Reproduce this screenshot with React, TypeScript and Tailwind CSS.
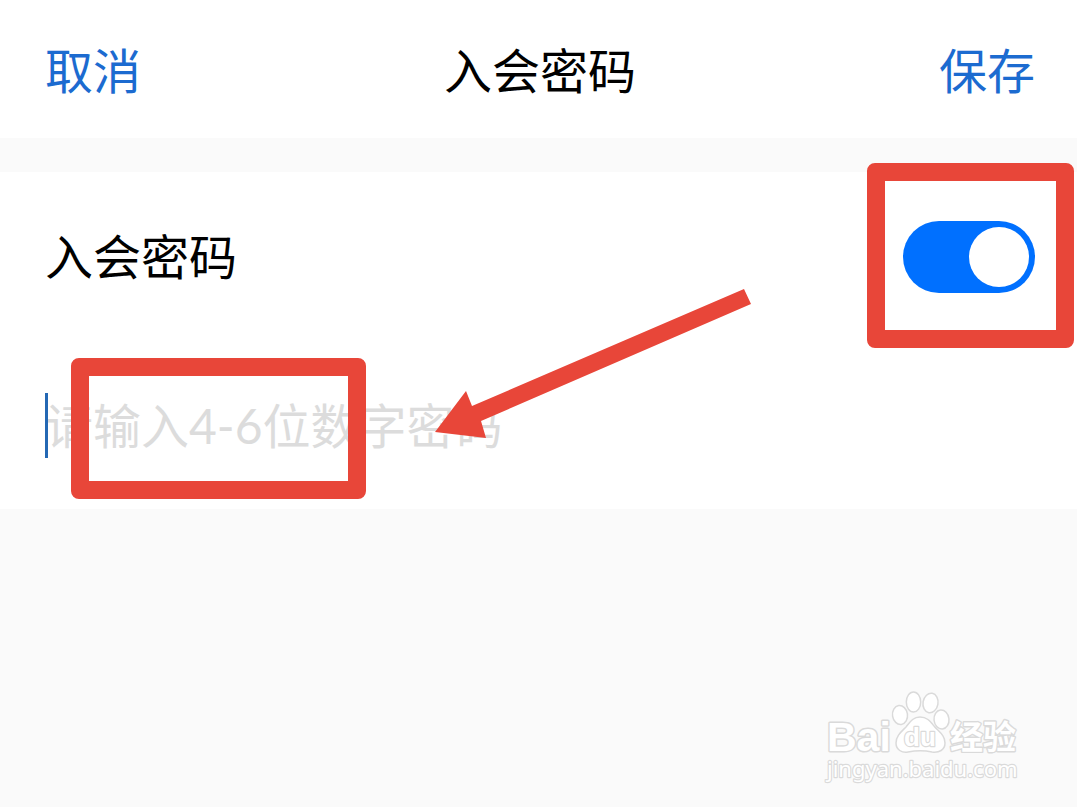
import React, { useState } from "react";

function Watermark() {
  return (
    <svg viewBox="0 0 206 106" className="w-[206px] h-[106px]" role="img" aria-label="Baidu 经验">
      <g fill="#ffffff" stroke="#dadada" strokeLinejoin="round">
        <text x="7" y="66" fontSize="41" fontWeight="700" paintOrder="stroke" strokeWidth="3" fontFamily="'Liberation Sans', sans-serif">
          Bai
        </text>
        <g strokeWidth="1.5">
          <ellipse cx="80" cy="30" rx="7.5" ry="9.5" transform="rotate(-8 80 30)" />
          <ellipse cx="93.5" cy="17" rx="7.2" ry="10" />
          <ellipse cx="110.5" cy="18" rx="7.5" ry="9.8" transform="rotate(10 110.5 18)" />
          <ellipse cx="121.5" cy="34.5" rx="7.5" ry="9.5" transform="rotate(-6 121.5 34.5)" />
          <path d="M100 32C93 32 90 37 86 42C81 47 76 51 76 58C76 65 82 68 88 67C96 65.5 105 65.5 112 67C119 68 125 65 125 58C125 50 119 47 114 41C110 36 107 32 100 32Z" />
        </g>
        <text x="84" y="61" fontSize="26" fontWeight="700" paintOrder="stroke" strokeWidth="2.4" fontFamily="'Liberation Sans', sans-serif">
          du
        </text>
        <text x="130" y="64" fontSize="33" fontWeight="700" paintOrder="stroke" strokeWidth="2.8" fontFamily="'Noto Sans CJK SC', sans-serif">
          经验
        </text>
        <text x="7" y="92" fontSize="22" paintOrder="stroke" strokeWidth="2.4" fontFamily="'Noto Sans', sans-serif">
          jingyan.baidu.com
        </text>
      </g>
    </svg>
  );
}

export default function App() {
  const [enabled, setEnabled] = useState(true);
  const [password, setPassword] = useState("");

  return (
    <div className="relative min-h-screen bg-[#fafafa] text-5xl leading-[66px] text-black font-['Lato','Noto_Sans_CJK_SC',sans-serif]">
      <header className="grid grid-cols-[1fr_auto_1fr] items-center bg-white pl-[45px] pr-[42px] pt-[38px] pb-[34px]">
        <button type="button" className="justify-self-start text-[#1c6bd0] cursor-pointer">
          取消
        </button>
        <h1>入会密码</h1>
        <button type="button" className="justify-self-end text-[#1c6bd0] cursor-pointer">
          保存
        </button>
      </header>

      <main className="relative mt-[34px] bg-white">
        {/* Switch row */}
        <div className="flex items-center justify-between pl-[45px] pr-[42px] py-[49px]">
          <label htmlFor="use-password">入会密码</label>
          <div className="relative flex">
            <input
              id="use-password"
              type="checkbox"
              role="switch"
              checked={enabled}
              onChange={(e) => setEnabled(e.target.checked)}
              className="peer appearance-none w-[132px] h-[72px] rounded-full bg-gray-300 checked:bg-[#0070ff] cursor-pointer"
            />
            <span className="pointer-events-none absolute top-[6px] left-[6px] size-[60px] rounded-full bg-white peer-checked:left-[66px]" />
            <span className="pointer-events-none absolute -top-[58px] -bottom-[55px] -left-9 -right-[39px] rounded-lg border-[18px] border-[#e84639]" />
          </div>
        </div>

        {/* Password row */}
        <div className="relative pl-[45px] pr-[42px] py-[51px]">
          <input
            type="text"
            inputMode="numeric"
            maxLength={6}
            aria-label="入会密码"
            placeholder="请输入4-6位数字密码"
            value={password}
            onChange={(e) => setPassword(e.target.value)}
            className="block w-full h-[65px] bg-transparent outline-none placeholder:text-[#dcdcdc]"
          />
          <span className="pointer-events-none absolute top-[51px] left-[45px] w-[3px] h-[65px] bg-[#2468b4]" />
          <span className="pointer-events-none absolute top-4 left-[71px] w-[295px] h-[141px] rounded-lg border-[18px] border-[#e84639]" />
        </div>

        <svg viewBox="0 0 318 150" className="pointer-events-none absolute top-[117px] left-[435px] w-[318px] h-[150px]" aria-hidden="true">
          <path d="M0 143L31 102L37 117L309 0L316 15L46 132L51 149Z" fill="#e84639" />
        </svg>
      </main>

      <div className="pointer-events-none absolute bottom-4 right-[51px]">
        <Watermark />
      </div>
    </div>
  );
}
